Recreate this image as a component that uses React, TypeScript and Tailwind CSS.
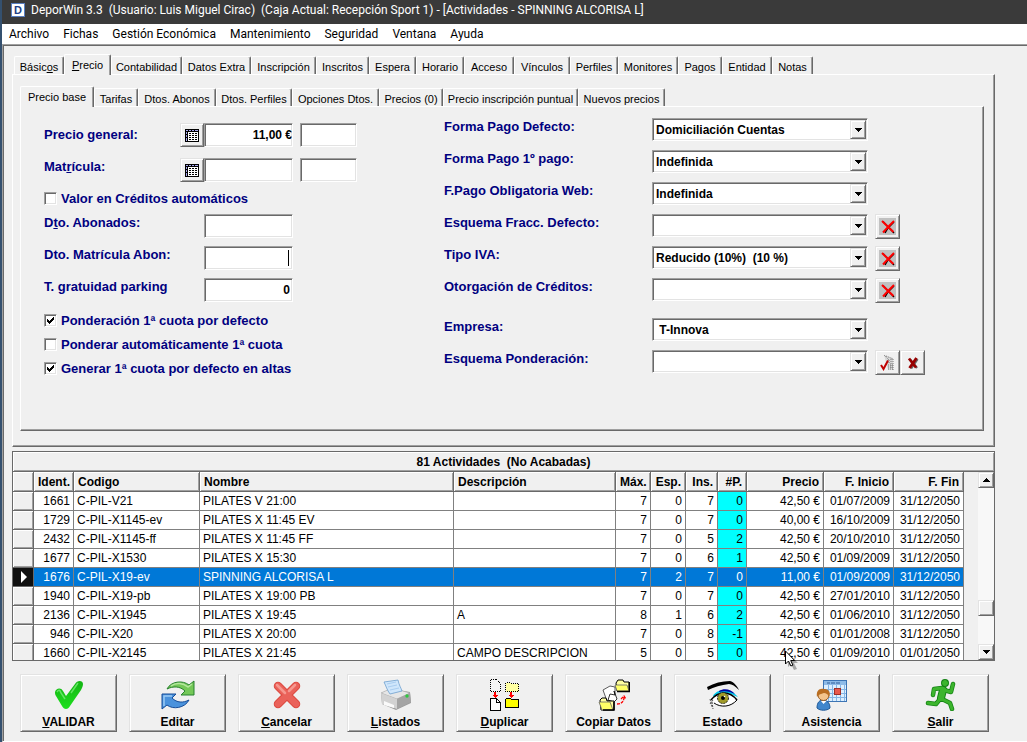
import { useState } from "react";
import type { ReactNode } from "react";
import clsx from "clsx";

const sunken =
  "border border-t-[#a0a0a0] border-l-[#a0a0a0] border-b-white border-r-white shadow-[inset_1px_1px_0_#696969,inset_-1px_-1px_0_#e3e3e3]";
const raised =
  "border border-t-[#e3e3e3] border-l-[#e3e3e3] border-b-[#696969] border-r-[#696969] shadow-[inset_1px_1px_0_#ffffff,inset_-1px_-1px_0_#a0a0a0] bg-[#f0f0f0]";
const panel =
  "border border-t-white border-l-white border-b-[#696969] border-r-[#696969] shadow-[inset_-1px_-1px_0_#a0a0a0]";

const menus = [
  "Archivo",
  "Fichas",
  "Gestión Económica",
  "Mantenimiento",
  "Seguridad",
  "Ventana",
  "Ayuda",
];

type TabItem = { label: ReactNode; width: string };

const mainTabs: TabItem[] = [
  { label: <>Básic<u>o</u>s</>, width: "w-[50px]" },
  { label: <><u>P</u>recio</>, width: "w-[47px]" },
  { label: "Contabilidad", width: "w-[71px]" },
  { label: "Datos Extra", width: "w-[69px]" },
  { label: "Inscripción", width: "w-[65px]" },
  { label: "Inscritos", width: "w-[53px]" },
  { label: "Espera", width: "w-[47px]" },
  { label: "Horario", width: "w-[48px]" },
  { label: "Acceso", width: "w-[50px]" },
  { label: "Vínculos", width: "w-[56px]" },
  { label: "Perfiles", width: "w-[48px]" },
  { label: "Monitores", width: "w-[60px]" },
  { label: "Pagos", width: "w-[44px]" },
  { label: "Entidad", width: "w-[50px]" },
  { label: "Notas", width: "w-[41px]" },
];

const priceTabs: TabItem[] = [
  { label: "Precio base", width: "w-[74px]" },
  { label: "Tarifas", width: "w-[44px]" },
  { label: "Dtos. Abonos", width: "w-[78px]" },
  { label: "Dtos. Perfiles", width: "w-[76px]" },
  { label: "Opciones Dtos.", width: "w-[87px]" },
  { label: "Precios (0)", width: "w-[64px]" },
  { label: "Precio inscripción puntual", width: "w-[135px]" },
  { label: "Nuevos precios", width: "w-[87px]" },
];

const columns = [
  { title: "Ident.", width: "w-[40px]", right: true },
  { title: "Codigo", width: "w-[126px]", right: false },
  { title: "Nombre", width: "w-[254px]", right: false },
  { title: "Descripción", width: "", right: false },
  { title: "Máx.", width: "w-[35px]", right: true },
  { title: "Esp.", width: "w-[35px]", right: true },
  { title: "Ins.", width: "w-[32px]", right: true },
  { title: "#P.", width: "w-[29px]", right: true },
  { title: "Precio", width: "w-[77px]", right: true },
  { title: "F. Inicio", width: "w-[70px]", right: true },
  { title: "F. Fin", width: "w-[70px]", right: true },
];

const rows = [
  ["1661", "C-PIL-V21", "PILATES V 21:00", "", "7", "0", "7", "0", "42,50 €", "01/07/2009", "31/12/2050"],
  ["1729", "C-PIL-X1145-ev", "PILATES X 11:45 EV", "", "7", "0", "7", "0", "40,00 €", "16/10/2009", "31/12/2050"],
  ["2432", "C-PIL-X1145-ff", "PILATES X 11:45 FF", "", "7", "0", "5", "2", "42,50 €", "20/10/2010", "31/12/2050"],
  ["1677", "C-PIL-X1530", "PILATES X 15:30", "", "7", "0", "6", "1", "42,50 €", "01/09/2009", "31/12/2050"],
  ["1676", "C-PIL-X19-ev", "SPINNING ALCORISA L", "", "7", "2", "7", "0", "11,00 €", "01/09/2009", "31/12/2050"],
  ["1940", "C-PIL-X19-pb", "PILATES X 19:00 PB", "", "7", "0", "7", "0", "42,50 €", "27/01/2010", "31/12/2050"],
  ["2136", "C-PIL-X1945", "PILATES X 19:45", "A", "8", "1", "6", "2", "42,50 €", "01/06/2010", "31/12/2050"],
  ["946", "C-PIL-X20", "PILATES X 20:00", "", "7", "0", "8", "-1", "42,50 €", "01/01/2008", "31/12/2050"],
  ["1660", "C-PIL-X2145", "PILATES X 21:45", "CAMPO DESCRIPCION", "5", "0", "5", "0", "42,50 €", "01/09/2010", "01/01/2050"],
];

function Tabs({
  items,
  active,
  onSelect,
  className,
}: {
  items: TabItem[];
  active: number;
  onSelect: (i: number) => void;
  className?: string;
}) {
  return (
    <div role="tablist" className={clsx("flex h-5 items-end", className)}>
      {items.map((tab, i) => (
        <button
          key={i}
          type="button"
          role="tab"
          aria-selected={i === active}
          onClick={() => onSelect(i)}
          className={clsx(
            "shrink-0 overflow-hidden whitespace-nowrap rounded-t-xs border-t border-l border-r border-t-white border-l-white border-r-[#696969] bg-[#f0f0f0] text-center text-[11px] leading-4 shadow-[inset_-1px_0_0_#a0a0a0]",
            tab.width,
            i === active ? "relative -mb-px h-[21px] pt-0.5 pb-1" : "h-[18px] pt-0.5"
          )}
        >
          {tab.label}
        </button>
      ))}
    </div>
  );
}

function TextField({
  id,
  label,
  value = "",
  className,
}: {
  id: string;
  label?: string;
  value?: string;
  className: string;
}) {
  return (
    <input
      id={id}
      aria-label={label}
      defaultValue={value}
      className={clsx(
        "h-6 bg-white text-right text-xs font-bold text-black outline-none",
        sunken,
        className
      )}
    />
  );
}

function GridButton({ label }: { label: string }) {
  return (
    <button
      type="button"
      aria-label={label}
      className={clsx("flex h-6 w-6 items-center justify-center", raised)}
    >
      <svg width="14" height="13" viewBox="0 0 14 13" shapeRendering="crispEdges">
        <rect width="14" height="13" fill="#000" />
        <path d="M1 1h2v1H1zM4 1h2v1H4zM7 1h2v1H7zM10 1h3v1h-3z" fill="#a8a8f0" />
        <path d="M1 3h1v2H1zM1 6h1v2H1zM1 9h1v3H1z" fill="#a8a8f0" />
        <rect x="3" y="3" width="10" height="9" fill="#fff" />
        <path d="M4 4.500h9M4 6.500h9M4 8.500h9M4 10.500h9" stroke="#000" strokeDasharray="2 1" />
      </svg>
    </button>
  );
}

function CheckRow({
  id,
  label,
  checked = false,
}: {
  id: string;
  label: string;
  checked?: boolean;
}) {
  const [on, setOn] = useState(checked);
  return (
    <div className="flex h-4 items-center gap-1">
      <span className="relative h-[13px] w-[13px]">
        <input
          id={id}
          type="checkbox"
          checked={on}
          onChange={(e) => setOn(e.target.checked)}
          className={clsx("block h-[13px] w-[13px] appearance-none bg-white", sunken)}
        />
        {on && (
          <svg
            className="pointer-events-none absolute left-0 top-0"
            width="13"
            height="13"
            viewBox="0 0 13 13"
            shapeRendering="crispEdges"
          >
            <path d="M3 5v3h1v1h1v1h1V9h1V8h1V7h1V6h1V3H9v1H8v1H7v1H6v1H5V6H4V5z" fill="#000" />
          </svg>
        )}
      </span>
      <label htmlFor={id} className="pt-0.5">
        {label}
      </label>
    </div>
  );
}

function RedCross() {
  return (
    <span className="flex h-[17px] w-[17px] items-center justify-center bg-[#c0c0c0]">
      <svg width="16" height="16" viewBox="0 0 16 16">
        <path d="M3 2.500 14 14M14 3 8 9 5 14" stroke="#000" strokeWidth="1.400" fill="none" />
        <path d="M2 2l11.500 11M14 2 9 7 3 13.500" stroke="#f00" strokeWidth="2" fill="none" />
      </svg>
    </span>
  );
}

function PickIcon() {
  return (
    <svg width="16" height="17" viewBox="0 0 16 17">
      <path d="M4 1l9 3v12H8" fill="#d8d8d8" />
      <path d="M4 1l5 5M6 2l7 3M9 6v3M11 5v10M13 5v11M8 11h6M8 13h6M8 15h6" stroke="#777" strokeDasharray="1 1" fill="none" />
      <path d="M1 11l2.500 4L8 6.500" stroke="#c00000" strokeWidth="2" fill="none" />
    </svg>
  );
}

function DarkCross() {
  return (
    <svg width="12" height="12" viewBox="0 0 12 12">
      <path d="M3 2.500 10 11M10.500 2 4 11.500" stroke="#666" strokeWidth="2.400" />
      <path d="M2 1.500 9 10.500M9.500 1 2.500 11" stroke="#980000" strokeWidth="2.800" />
    </svg>
  );
}

function IconButton({ label, children }: { label: string; children: ReactNode }) {
  return (
    <button
      type="button"
      aria-label={label}
      className={clsx("flex h-[25px] w-[25px] items-center justify-center", raised)}
    >
      {children}
    </button>
  );
}

function SelectRow({
  id,
  label,
  value = "",
  children,
}: {
  id: string;
  label: string;
  value?: string;
  children?: ReactNode;
}) {
  return (
    <div className="flex h-6 items-start">
      <label htmlFor={id} className="w-52">
        {label}
      </label>
      <div className="relative w-[216px]">
        <select
          id={id}
          defaultValue={value}
          className={clsx(
            "block h-[23px] w-full appearance-none bg-white pl-[3px] text-xs font-bold text-black outline-none",
            sunken
          )}
        >
          <option>{value}</option>
        </select>
        <span
          className={clsx(
            "pointer-events-none absolute bottom-0.5 right-0.5 top-0.5 flex w-4 items-center justify-center",
            raised
          )}
        >
          <svg width="7" height="4" viewBox="0 0 7 4" shapeRendering="crispEdges">
            <path d="M0 0h7v1H0zM1 1h5v1H1zM2 2h3v1H2zM3 3h1v1H3z" />
          </svg>
        </span>
      </div>
      <div className="ml-[7px] flex">{children}</div>
    </div>
  );
}

function Scrollbar() {
  const btn = clsx("flex h-4 w-4 shrink-0 items-center justify-center", raised);
  return (
    <div className="flex w-4 shrink-0 flex-col bg-[#f8f8f8]">
      <button type="button" aria-label="Subir" className={btn}>
        <svg width="7" height="4" viewBox="0 0 7 4" shapeRendering="crispEdges">
          <path d="M3 0h1v1H3zM2 1h3v1H2zM1 2h5v1H1zM0 3h7v1H0z" />
        </svg>
      </button>
      <div className="grow-4" />
      <div className={btn} />
      <div className="grow" />
      <button type="button" aria-label="Bajar" className={btn}>
        <svg width="7" height="4" viewBox="0 0 7 4" shapeRendering="crispEdges">
          <path d="M0 0h7v1H0zM1 1h5v1H1zM2 2h3v1H2zM3 3h1v1H3z" />
        </svg>
      </button>
    </div>
  );
}

function ActivityGrid() {
  const [selected, setSelected] = useState(4);
  const head =
    "h-5 border-r border-b border-[#696969] bg-[#f0f0f0] px-1 font-bold shadow-[inset_1px_1px_0_#ffffff,inset_-1px_-1px_0_#a0a0a0]";
  return (
    <section className="relative mt-1 border border-[#696969] text-xs">
      <h2 className="h-5 border-b border-[#696969] text-center font-bold leading-5 whitespace-pre shadow-[inset_1px_1px_0_#ffffff,inset_-1px_-1px_0_#a0a0a0]">
        {"81 Actividades  (No Acabadas)"}
      </h2>
      <div className="flex h-[188px] overflow-hidden">
        <div className="min-w-0 grow overflow-hidden">
          <table className="w-full table-fixed border-separate border-spacing-0">
            <thead>
              <tr>
                <th className={clsx("w-[21px]", head)} aria-label="Selección" />
                {columns.map((col) => (
                  <th
                    key={col.title}
                    className={clsx(head, col.width, col.right ? "text-right" : "text-left")}
                  >
                    {col.title}
                  </th>
                ))}
              </tr>
            </thead>
            <tbody>
              {rows.map((row, r) => {
                const on = r === selected;
                return (
                  <tr
                    key={row[0]}
                    onClick={() => setSelected(r)}
                    className={on ? "bg-[#0078d7] text-white" : "bg-white text-black"}
                  >
                    <td
                      className={clsx(
                        "border-r border-b border-[#696969]",
                        on
                          ? "bg-[#101010]"
                          : "bg-[#f0f0f0] shadow-[inset_1px_1px_0_#ffffff,inset_-1px_-1px_0_#a0a0a0]"
                      )}
                    >
                      {on && (
                        <svg className="ml-2" width="6" height="12" viewBox="0 0 6 12">
                          <path d="M0 0l6 6-6 6z" fill="#fff" />
                        </svg>
                      )}
                    </td>
                    {row.map((cell, c) => (
                      <td
                        key={c}
                        className={clsx(
                          "h-[19px] whitespace-nowrap border-r border-b border-[#808080] px-[3px] leading-[18px]",
                          columns[c].right ? "text-right" : "text-left",
                          c === 7 && !on && "bg-[#00ffff]"
                        )}
                      >
                        {cell}
                      </td>
                    ))}
                  </tr>
                );
              })}
            </tbody>
          </table>
        </div>
        <div className="w-3.5 shrink-0" />
        <Scrollbar />
      </div>
      <svg className="pointer-events-none absolute left-[772px] top-[198px]" width="14" height="20" viewBox="0 0 14 20">
        <path d="M3 3v14l3-3 3 6 3-1-3-6h4z" fill="#000" opacity=".3" />
        <path d="M.5 1v13l3-3 2.400 5 2-.9L5.700 10.500h4z" fill="#fff" stroke="#000" />
      </svg>
    </section>
  );
}

function CheckIcon() {
  return (
    <svg width="32" height="32" viewBox="0 0 32 32">
      <defs>
        <linearGradient id="ok" x1="0" y1="0" x2="0" y2="1">
          <stop offset="0" stopColor="#14b414" />
          <stop offset="1" stopColor="#1ee01e" />
        </linearGradient>
      </defs>
      <path d="M2 13c1-4 6-5 8-1l3 5L22 5c2-4 8-4 8 0 0 2-1 4-2 6L17 27c-2 4-6 4-8 0L3 17c-1-1-1-3-1-4z" fill="url(#ok)" />
      <path d="M4 13c2-3 3-2 4 1l4 6M25 4l-7 10" stroke="#63e563" strokeWidth="1.500" fill="none" />
    </svg>
  );
}

function RefreshIcon() {
  return (
    <svg width="34" height="30" viewBox="0 0 34 30">
      <path d="M6 9C10 1 22 0 28 5l5-4v14H20l4-4c-5-5-12-5-18-2z" fill="#74c858" stroke="#27812e" />
      <path d="M10 6c5-4 12-3 17 1l4-3" stroke="#b4e79e" strokeWidth="1.500" fill="none" />
      <path d="M28 20c-4 8-16 10-22 5l-5 4V14h14l-4 4c5 5 11 5 17 2z" fill="#4a92dc" stroke="#174d97" />
      <path d="M3 26V16h8" stroke="#9ccbf5" strokeWidth="1.500" fill="none" />
    </svg>
  );
}

function CancelIcon() {
  return (
    <svg width="28" height="28" viewBox="0 0 28 28">
      <path d="M5 5l18 18M23 5 5 23" stroke="#dc4a40" strokeWidth="8.500" strokeLinecap="round" />
      <path d="M5 5l18 18M23 5 5 23" stroke="#ea625a" strokeWidth="6.500" strokeLinecap="round" />
      <path d="M4 4l8 8M22 4l-6 6" stroke="#f6988f" strokeWidth="2.500" strokeLinecap="round" />
    </svg>
  );
}

function PrinterIcon() {
  return (
    <svg width="32" height="32" viewBox="0 0 32 32">
      <path d="M1 14l10-4 19 3 1 11-15 7L2 25z" fill="#9a9a9a" />
      <path d="M1 14l11-5 18 5-13 6z" fill="#e6e6e6" stroke="#a8a8a8" strokeWidth=".6" />
      <path d="M1 14l16 6v10L2 25z" fill="#d2d2d2" />
      <path d="M17 20l13-6 1 9-14 7z" fill="#a4a4a4" />
      <path d="M4 22l10 4v3L4 26z" fill="#fafafa" />
      <path d="M4 3l14-2c1 5 3 8 4 11l-12 3C7 11 6 7 4 3z" fill="#cfe6fb" stroke="#6f9fce" strokeWidth=".8" />
      <path d="M7 5l9-2M8 8l9-2M10 11l9-2" stroke="#a9cdf0" />
      <circle cx="27" cy="17" r="1.700" fill="#2fc840" />
    </svg>
  );
}

function DuplicateIcon() {
  return (
    <svg width="30" height="32" viewBox="0 0 30 32" shapeRendering="crispEdges">
      <path d="M.5.5h6l4 4v8H.5z" fill="#f4f4f4" stroke="#000" strokeDasharray="1 1" />
      <path d="M15.500 4.500l1-1h4l1 1h7v8h-13z" fill="#ffffa0" stroke="#000" strokeDasharray="1 1" />
      <path d="M4 13h2v3h2l-3 3-3-3h2zM20 13h2v3h2l-3 3-3-3h2z" fill="#f00" />
      <path d="M.5 19.500h6l4 4v8H.5z" fill="#fff" stroke="#000" />
      <path d="M6.500 19.500v4h4" fill="none" stroke="#000" />
      <path d="M15.500 20.500l1-1h4l1 1h7v8h-13z" fill="#ff0" stroke="#000" />
    </svg>
  );
}

function CopyIcon() {
  return (
    <svg width="32" height="32" viewBox="0 0 32 32">
      <path d="M18 4l2-3h5l1 2h5v9H19z" fill="#ffffa0" stroke="#000" />
      <path d="M17 6h12l2 6H19z" fill="#ffff66" stroke="#666" strokeWidth=".8" />
      <path d="M31.500 3v9.500H19" stroke="#000" strokeWidth="1.500" fill="none" />
      <path d="M5 11l7-4 5 1v10l-8 4z" fill="#fff" stroke="#333" strokeWidth=".8" />
      <path d="M10 21l2-6 5 1-1-4 3 8-3 3z" fill="#fff" stroke="#000" strokeWidth=".8" />
      <path d="M2 21l2-2h4l1 3h7v9H3z" fill="#ffffa0" stroke="#000" />
      <path d="M1 23h11l3 8H4z" fill="#ffff66" stroke="#666" strokeWidth=".8" />
      <path d="M16 23v8H5" stroke="#000" strokeWidth="1.500" fill="none" />
      <path d="M19 25c4 0 7-2 7-7M23 20l3-3 2 3" stroke="#f00" strokeWidth="1.300" fill="none" strokeDasharray="3 1" />
    </svg>
  );
}

function EyeIcon() {
  return (
    <svg width="34" height="30" viewBox="0 0 34 30">
      <path d="M1 7C8 3 16 1 24 1c4 1 7 5 9 9-4-4-7-6-10-6C15 5 8 7 2 10z" fill="#000" />
      <path d="M7 16c4-7 16-9 25 1l-3-1C22 12 14 12 8 17z" fill="#00c8e8" />
      <path d="M13 11c5-3 12-2 16 3l-5-2c-4-1-7-1-11 0z" fill="#0000a0" />
      <path d="M6 21c5-8 16-11 25-3-5 8-17 10-25 3z" fill="#fff" />
      <path d="M5 20c4-5 8-7 13-7s9 2 13 7" fill="none" stroke="#000" strokeWidth="1.700" />
      <path d="M8 23c7 5 17 4 23-3" fill="none" stroke="#000" />
      <circle cx="17" cy="18" r="5.500" fill="#a09a28" stroke="#222" strokeDasharray="2 1" />
      <circle cx="17" cy="18" r="2" fill="#000" />
      <circle cx="18.500" cy="16.500" r=".8" fill="#fff" />
      <path d="M4 19l2 8M6 22l1 7M7 20l-3 4" stroke="#555" strokeDasharray="2 1" />
    </svg>
  );
}

function AttendanceIcon() {
  return (
    <svg width="32" height="32" viewBox="0 0 32 32">
      <rect x="7.500" y="1.500" width="23" height="21" fill="#dcefff" stroke="#3c74b4" />
      <rect x="8" y="2" width="22" height="4" fill="#8dbbe8" />
      <path d="M11 4h3M15 4h4M20 4h4" stroke="#315f9a" />
      <path d="M8 10.500h22M8 14.500h22M8 18.500h22M12.500 6v16M16.500 6v16M20.500 6v16M24.500 6v16M28.500 6v16" stroke="#85b5e5" />
      <rect x="18.500" y="9.500" width="6" height="6" fill="#e8594d" stroke="#a03028" />
      <path d="M1 29c0-6 3-8 6-8s7 2 7 8c-3 3-10 3-13 0z" fill="#4086cc" stroke="#1e5896" />
      <path d="M5 22l2.500 3 3-3" fill="#fff" />
      <circle cx="7.500" cy="16" r="5.500" fill="#f3c48c" stroke="#9b5c20" />
      <path d="M1 18c-1-6 2-9 7-8 5 0 7 3 5 8-1-3-3-4-5-4-3 1-5 1-7 4z" fill="#b96e22" />
    </svg>
  );
}

function ExitIcon() {
  return (
    <svg width="32" height="32" viewBox="0 0 32 32">
      <g stroke="#148214" fill="none" strokeLinecap="round" strokeLinejoin="round">
        <path d="M18 11l-2 8" strokeWidth="8" />
        <path d="M17 9 9 10l-1 6M19 11l7 2 2-8M15 20l-4 5-8-1M17 20l8 4 2 6" strokeWidth="4.500" />
        <circle cx="20" cy="4" r="3" fill="#148214" strokeWidth="2" />
      </g>
      <g stroke="#3cb52d" fill="none" strokeLinecap="round" strokeLinejoin="round">
        <path d="M18 11l-2 8" strokeWidth="6" />
        <path d="M17 9 9 10l-1 6M19 11l7 2 2-8M15 20l-4 5-8-1M17 20l8 4 2 6" strokeWidth="3" />
        <circle cx="20" cy="4" r="2.500" fill="#3cb52d" />
      </g>
    </svg>
  );
}

const actions = [
  { key: "validar", label: <><u>V</u>ALIDAR</>, icon: <CheckIcon /> },
  { key: "editar", label: "Editar", icon: <RefreshIcon /> },
  { key: "cancelar", label: <><u>C</u>ancelar</>, icon: <CancelIcon /> },
  { key: "listados", label: <><u>L</u>istados</>, icon: <PrinterIcon /> },
  { key: "duplicar", label: <><u>D</u>uplicar</>, icon: <DuplicateIcon /> },
  { key: "copiar", label: "Copiar Datos", icon: <CopyIcon /> },
  { key: "estado", label: "Estado", icon: <EyeIcon /> },
  { key: "asistencia", label: "Asistencia", icon: <AttendanceIcon /> },
  { key: "salir", label: <><u>S</u>alir</>, icon: <ExitIcon /> },
];

function PriceForm() {
  return (
    <div
      className={clsx(
        "flex pb-[54px] pl-[23px] text-[13px] font-bold leading-[18px] text-[#000080]",
        panel
      )}
    >
      <div className="w-[400px] shrink-0 pt-4">
        <div className="flex h-6 items-center">
          <label htmlFor="precio" className="w-[136px]">
            Precio general:
          </label>
          <GridButton label="Tabla de precios" />
          <TextField id="precio" value="11,00 €" className="w-[89px]" />
          <TextField id="precio2" label="Precio general 2" className="ml-[7px] w-[57px]" />
        </div>
        <div className="mt-[11px] flex items-start">
          <label htmlFor="matricula" className="w-[136px]">
            Mat<u>r</u>ícula:
          </label>
          <GridButton label="Tabla de matrículas" />
          <TextField id="matricula" className="w-[89px]" />
          <TextField id="matricula2" label="Matrícula 2" className="ml-[7px] w-[57px]" />
        </div>
        <div className="mt-2 flex flex-col gap-2">
          <CheckRow id="creditos" label="Valor en Créditos automáticos" />
          <div className="flex items-start">
            <label htmlFor="abonados" className="w-40">
              D<u>t</u>o. Abonados:
            </label>
            <TextField id="abonados" className="w-[89px]" />
          </div>
          <div className="flex items-start">
            <label htmlFor="abon" className="w-40">
              Dto. Matrícula Abon:
            </label>
            <div className="relative">
              <TextField id="abon" className="block w-[89px]" />
              <span className="absolute right-1 top-1 h-4 w-px bg-black" />
            </div>
          </div>
          <div className="flex items-start">
            <label htmlFor="parking" className="w-40">
              T. gratuidad parking
            </label>
            <TextField id="parking" value="0" className="w-[89px] pr-0.5" />
          </div>
        </div>
        <div className="mt-2.5 flex flex-col gap-2">
          <CheckRow id="ponderacion" label="Ponderación 1ª cuota por defecto" checked />
          <CheckRow id="ponderar" label="Ponderar automáticamente 1ª cuota" />
          <CheckRow id="generar" label="Generar 1ª cuota por defecto en altas" checked />
        </div>
      </div>

      <div className="flex flex-col gap-2 pt-[11px]">
        <SelectRow id="forma" label="Forma Pago Defecto:" value="Domiciliación Cuentas" />
        <SelectRow id="primer" label="Forma Pago 1º pago:" value="Indefinida" />
        <SelectRow id="web" label="F.Pago Obligatoria Web:" value="Indefinida" />
        <SelectRow id="fracc" label="Esquema Fracc. Defecto:">
          <IconButton label="Quitar esquema">
            <RedCross />
          </IconButton>
        </SelectRow>
        <SelectRow id="iva" label="Tipo IVA:" value={"Reducido (10%)\u00a0 (10 %)"}>
          <IconButton label="Quitar IVA">
            <RedCross />
          </IconButton>
        </SelectRow>
        <SelectRow id="otorgacion" label="Otorgación de Créditos:">
          <IconButton label="Quitar créditos">
            <RedCross />
          </IconButton>
        </SelectRow>
        <div className="mt-2 flex flex-col gap-2">
          <SelectRow id="empresa" label="Empresa:" value={"\u00a0T-Innova"} />
          <SelectRow id="esquema" label="Esquema Ponderación:">
            <IconButton label="Elegir ponderación">
              <PickIcon />
            </IconButton>
            <IconButton label="Quitar ponderación">
              <DarkCross />
            </IconButton>
          </SelectRow>
        </div>
      </div>
    </div>
  );
}

export default function App() {
  const [tab, setTab] = useState(1);
  const [priceTab, setPriceTab] = useState(0);

  return (
    <div className="flex min-h-screen flex-col overflow-hidden border-l-2 border-[#34506f] bg-[#f0f0f0] font-['Liberation_Sans',Arial,sans-serif] text-black">
      <header className="flex h-6 items-center gap-1.5 bg-[#3a3a3a] pb-2 pl-[9px] pt-1 font-[Roboto,'Open_Sans',sans-serif] text-xs text-white">
        <span className="flex h-[14px] w-[14px] items-center justify-center border border-[#5a7fc0] bg-white font-['Liberation_Sans',sans-serif] text-[11px] font-bold leading-none text-[#1f3f86]">
          D
        </span>
        <h1 className="whitespace-pre">
          {"DeporWin 3.3  (Usuario: Luis Miguel Cirac)  (Caja Actual: Recepción Sport 1) - [Actividades - SPINNING ALCORISA L]"}
        </h1>
      </header>
      <nav className="flex h-5 items-center gap-3.5 bg-white pl-[7px] font-[Roboto,'Open_Sans',sans-serif] text-xs">
        {menus.map((m) => (
          <button key={m} type="button">
            {m}
          </button>
        ))}
      </nav>

      <main className="grow border-y border-l border-t-[#a0a0a0] border-l-[#a0a0a0] border-b-white pb-2 pl-[9px] pr-8 pt-[9px] shadow-[inset_1px_1px_0_#696969]">
        <Tabs items={mainTabs} active={tab} onSelect={setTab} className="pl-0.5" />
        <div className={clsx("pb-[15px] pl-[7px] pr-2.5 pt-[11px]", panel)}>
          <Tabs items={priceTabs} active={priceTab} onSelect={setPriceTab} />
          <PriceForm />
        </div>

        <ActivityGrid />

        <div className="mt-[13px] grid grid-cols-9 gap-3 pl-2 pr-1.5">
          {actions.map((a) => (
            <button
              key={a.key}
              type="button"
              className={clsx("flex h-[58px] flex-col items-center pt-1 text-xs font-bold", raised)}
            >
              <span className="flex h-8 items-center">{a.icon}</span>
              <span className="mt-[3px] whitespace-nowrap">{a.label}</span>
            </button>
          ))}
        </div>
      </main>
    </div>
  );
}
